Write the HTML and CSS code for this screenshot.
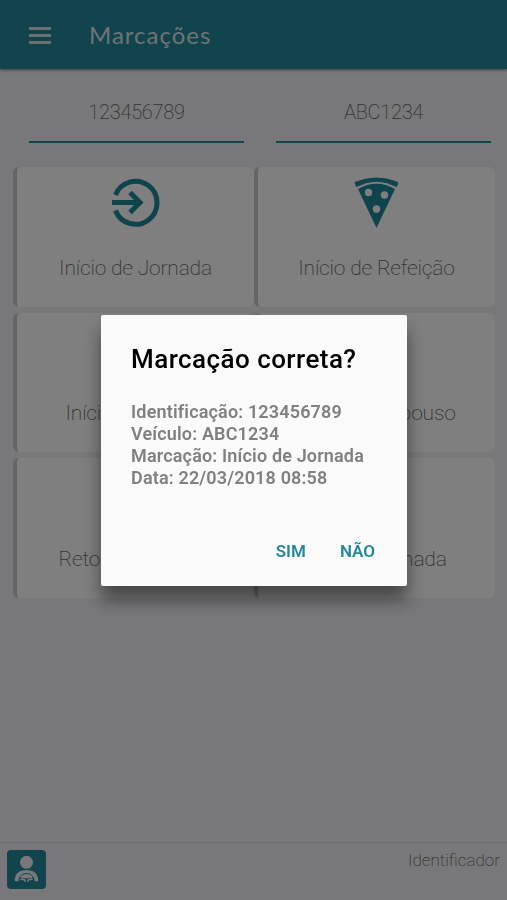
FILE: index.html
```html
<!DOCTYPE html>
<html lang="pt-BR">
<head>
    <meta charset="UTF-8">
    <meta name="viewport" content="width=device-width, initial-scale=1.0">
    <title>Marcações</title>
    <link rel="stylesheet" href="styles.css">
</head>
<body>
    <div class="app">
        <header class="toolbar">
            <button class="menu-button" aria-label="Menu">
                <span></span>
                <span></span>
                <span></span>
            </button>
            <h1>Marcações</h1>
        </header>

        <main>
            <div class="fields">
                <div class="field">123456789</div>
                <div class="field">ABC1234</div>
            </div>

            <div class="cards">
                <div class="card">
                    <svg class="card-icon" viewBox="0 0 50 50">
                        <path d="M4.500 17A21.500 21.500 0 1 1 4.500 32.500" fill="none" stroke="currentColor" stroke-width="5"/>
                        <path d="M1 24.500H28M19 14.500L29 24.500L19 34.500" fill="none" stroke="currentColor" stroke-width="5"/>
                    </svg>
                    <span>Início de Jornada</span>
                </div>
                <div class="card">
                    <svg class="card-icon" viewBox="0 0 50 50">
                        <path d="M3 4.500Q24.500-4.500 46 4.500L44.500 8.500Q24.500-2 4.500 8.500Z" fill="currentColor" stroke="currentColor" stroke-width="1" stroke-linejoin="round"/>
                        <path d="M6 11Q24.500 0.500 43 11L24.500 50Z" fill="currentColor"/>
                        <circle class="hole" cx="16.500" cy="14.500" r="3.700"/>
                        <circle class="hole" cx="32.500" cy="17" r="3.700"/>
                        <circle class="hole" cx="24.500" cy="31" r="3.700"/>
                    </svg>
                    <span>Início de Refeição</span>
                </div>
                <div class="card">
                    <span>Início de Espera</span>
                </div>
                <div class="card">
                    <span>Início de Repouso</span>
                </div>
                <div class="card">
                    <span>Retorno Refeição</span>
                </div>
                <div class="card">
                    <span>Fim de Jornada</span>
                </div>
            </div>
        </main>

        <footer class="footer">
            <div class="driver">
                <svg viewBox="0 0 38 38">
                    <circle cx="19" cy="12" r="6.300" fill="#f1f1f6"/>
                    <path d="M7.500 30.500C7.500 23 12 19.500 19 19.500S30.500 23 30.500 30.500H27A8 8 0 0 0 11 30.500Z" fill="#f1f1f6"/>
                    <path d="M13 25.500Q19 21.500 25 25.500L24 27.500H14Z" fill="#f1f1f6"/>
                    <path d="M13 28.500L17 29L18 31M25 28.500L21 29L20 31" fill="none" stroke="#f1f1f6" stroke-width="1.500"/>
                </svg>
            </div>
            <span>Identificador</span>
        </footer>
    </div>

    <div class="backdrop">
        <div class="dialog">
            <h2>Marcação correta?</h2>
            <p>
                Identificação: 123456789<br>
                Veículo: ABC1234<br>
                Marcação: Início de Jornada<br>
                Data: 22/03/2018 08:58
            </p>
            <div class="dialog-actions">
                <button>SIM</button>
                <button>NÃO</button>
            </div>
        </div>
    </div>
</body>
</html>
```

FILE: styles.css
```css
* {
    box-sizing: border-box;
}
body {
    font-family: Roboto, sans-serif;
    margin: 0;
    height: 100vh;
    overflow: hidden;
}
button {
    font-family: inherit;
    background: none;
    border: none;
    padding: 0;
}
.app {
    display: flex;
    flex-direction: column;
    height: 100vh;
    background-color: #f1f1f6;
    color: #666;
    font-weight: 200;
}
.toolbar {
    display: flex;
    align-items: center;
    height: 69px;
    padding: 1px 29px 0;
    background-color: #24889c;
    box-shadow: 0 1px 3px rgba(0, 0, 0, 0.5);
}
.menu-button {
    display: flex;
    flex-direction: column;
    gap: 4px;
    width: 22px;
}
.menu-button span {
    height: 3px;
    background-color: #d8dfe2;
}
h1 {
    margin: 0 0 2px 38px;
    font-family: Lato, sans-serif;
    font-size: 24px;
    font-weight: 400;
    letter-spacing: 1px;
    color: #dde6ea;
}
main {
    flex: 1;
}
.fields {
    display: flex;
    gap: 32px;
    padding: 26px 16px 0 29px;
}
.field {
    flex: 1;
    height: 48px;
    line-height: 34px;
    font-size: 20px;
    letter-spacing: -0.3px;
    text-align: center;
    border-bottom: 2px solid #24889c;
}
.cards {
    display: grid;
    grid-template-columns: 1fr 1fr;
    gap: 6px 0;
    padding: 24px 12px 0 13px;
}
.card {
    display: flex;
    flex-direction: column;
    align-items: center;
    justify-content: flex-end;
    height: 139.5px;
    padding: 0 0 26px;
    background-color: #fff;
    border-left: 4px solid #cbcbcd;
    border-radius: 6px;
    font-size: 21px;
    letter-spacing: -0.2px;
    line-height: 26px;
}
.card-icon {
    width: 50px;
    height: 50px;
    margin-bottom: 27px;
    overflow: visible;
    color: #20889a;
}
.hole {
    fill: #fff;
}
.footer {
    display: flex;
    justify-content: space-between;
    height: 58px;
    padding: 7px 7px 0;
    border-top: 1px solid #d8d8dc;
    font-size: 17px;
    line-height: 20px;
}
.driver {
    width: 39px;
    height: 39px;
    background-color: #24889c;
    border-radius: 4px;
}
.backdrop {
    position: fixed;
    inset: 0;
    display: flex;
    align-items: center;
    justify-content: center;
    background-color: rgba(0, 0, 0, 0.5);
}
.dialog {
    width: 306px;
    height: 271px;
    margin: 1px 0 0 1px;
    padding: 28px 24px 0 30px;
    background-color: #fafafa;
    border-radius: 2px;
    box-shadow: 0 14px 18px rgba(0, 0, 0, 0.45);
}
h2 {
    margin: 0;
    font-size: 26px;
    font-weight: 500;
    letter-spacing: 0.45px;
    line-height: 32px;
    color: #000;
}
.dialog p {
    margin: 26px 0 0;
    font-size: 18px;
    font-weight: 600;
    letter-spacing: 0.16px;
    line-height: 22px;
    white-space: nowrap;
    color: #808080;
}
.dialog-actions {
    display: flex;
    justify-content: flex-end;
    gap: 34px;
    margin: 52px 8px 0 0;
}
.dialog-actions button {
    font-size: 17px;
    font-weight: 600;
    line-height: 20px;
    color: #24889c;
}
```
